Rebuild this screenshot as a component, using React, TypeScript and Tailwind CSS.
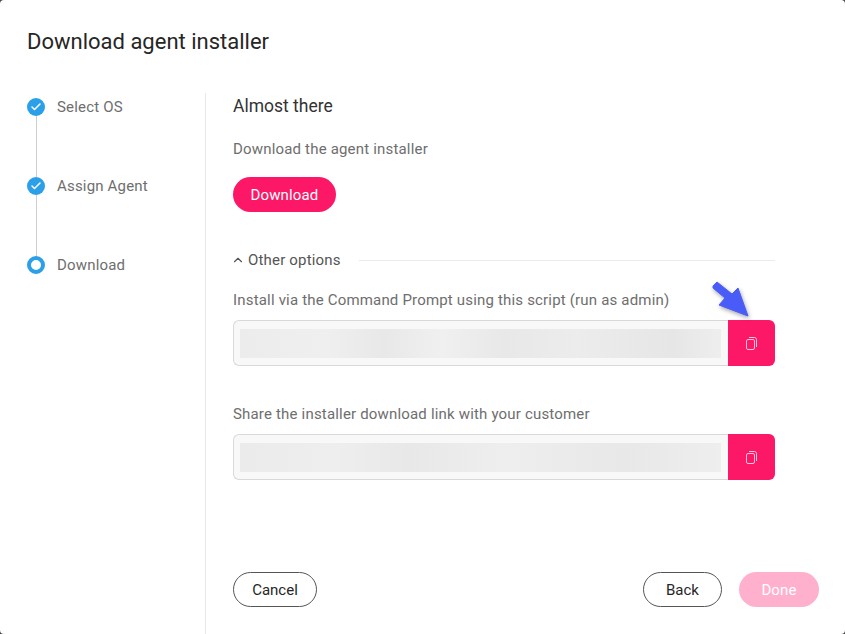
import { ChevronUp, Check } from "lucide-react";

const steps = ["Select OS", "Assign Agent", "Download"];

function StepIcon({ done }: { done: boolean }) {
  if (done) {
    return (
      <div className="flex h-[18px] w-[18px] items-center justify-center rounded-full bg-[#2b9fe8]">
        <Check className="h-3 w-3 text-white" strokeWidth={3} />
      </div>
    );
  }
  return <div className="h-[18px] w-[18px] rounded-full border-[4px] border-[#2b9fe8] bg-white" />;
}

function CopyField({ blurClass }: { blurClass: string }) {
  return (
    <div className="flex h-[46px] w-[542px]">
      <div className="flex flex-1 items-center rounded-l-[6px] border border-r-0 border-[#d9d9d9] bg-[#f8f8f8] pl-[6px] pr-[7px]">
        <div className={`h-[29px] w-full ${blurClass}`} />
      </div>
      <button className="flex w-[47px] items-center justify-center rounded-r-[6px] bg-[#fd1767]">
        <svg className="h-[13px] w-[11px] text-white/75" viewBox="0 0 11 13" fill="none" stroke="currentColor" strokeWidth="1">
          <rect x="0.5" y="2.5" width="8" height="10" rx="1.5" />
          <path d="M3 0.5 H8.5 A2 2 0 0 1 10.5 2.5 V10" />
        </svg>
      </button>
    </div>
  );
}

export default function App() {
  return (
    <div className="h-[634px] w-[845px] overflow-hidden bg-[#444444] font-['Roboto',sans-serif]">
      <div className="h-full overflow-hidden rounded-[4px] bg-white">
        <h1 className="pl-[27px] pt-[29px] text-[22px] leading-[26px] text-[#262626]">Download agent installer</h1>

        <div className="mt-[38px] flex h-[541px]">
          {/* Steps */}
          <div className="w-[205px] shrink-0 pl-[27px] pt-[5px]">
            {steps.map((step, i) => (
              <div key={step} className="flex h-[79px] gap-[12px]">
                <div className="flex w-[18px] flex-col items-center">
                  <StepIcon done={i < 2} />
                  {i < 2 && <div className="w-px flex-1 bg-[#cfcfcf]" />}
                </div>
                <span className="text-[15px] leading-[18px] tracking-[0.18px] text-[#6e6e6e]">{step}</span>
              </div>
            ))}
          </div>

          <div className="flex flex-1 flex-col border-l border-[#e8e8e8] pb-[27px] pl-[27px] pr-[42px]">
            <h2 className="pt-px text-[17.5px] leading-[24px] text-[#333333]">Almost there</h2>
            <p className="mt-[22px] text-[15px] leading-[18px] tracking-[0.18px] text-[#6e6e6e]">Download the agent installer</p>
            <button className="mt-[19px] h-[35px] w-[103px] rounded-full bg-[#fd1767] pt-px text-[15px] font-[450] tracking-[0.15px] text-white">Download</button>

            <div className="mt-[39px] flex w-[542px] items-center">
              <ChevronUp className="-ml-[2px] h-[14px] w-[14px] text-[#555555]" strokeWidth={2} />
              <span className="ml-[3px] text-[15px] leading-[18px] tracking-[0.18px] text-[#555555]">Other options</span>
              <div className="ml-[18px] h-px flex-1 bg-[#ebebeb]" />
            </div>

            <p className="mt-[22px] text-[15px] leading-[18px] tracking-[0.18px] text-[#6e6e6e]">Install via the Command Prompt using this script (run as admin)</p>
            <div className="relative mt-[11px] w-[542px]">
              <CopyField blurClass="bg-[linear-gradient(90deg,#ececec,#efefef_18%,#e8e8e8_30%,#f0f0f0_42%,#e8e8e8_55%,#ececec_70%,#e6e6e6_90%,#eeeeee)]" />
              {/* Arrow pointing at the copy button */}
              <svg className="absolute right-[20px] top-[-41px] h-[44px] w-[44px] drop-shadow-[1px_2px_2px_rgba(0,0,0,0.35)]" viewBox="0 0 44 44">
                <path d="M2 7 L6 3 L21 15 L27 9 L37 37 L8 26 L14 19 L2 9 Z" fill="#4a5cf7" stroke="#4a5cf7" strokeWidth="1" strokeLinejoin="round" />
              </svg>
            </div>

            <p className="mt-[39px] text-[15px] leading-[18px] tracking-[0.18px] text-[#6e6e6e]">Share the installer download link with your customer</p>
            <div className="mt-[11px]">
              <CopyField blurClass="bg-[linear-gradient(90deg,#ebebeb,#eeeeee_20%,#e8e8e8_35%,#eeeeee_55%,#e8e8e8_80%,#eeeeee)]" />
            </div>

            <div className="mt-auto -mr-[16px] flex items-center">
              <button className="h-[35px] w-[84px] rounded-full border border-[#555555] pt-px text-[15px] text-[#262626]">Cancel</button>
              <button className="ml-auto h-[35px] w-[79px] rounded-full border border-[#555555] pt-px text-[15px] text-[#262626]">Back</button>
              <button className="ml-[17px] h-[35px] w-[80px] rounded-full bg-[#feb0cc] pt-px text-[15px] font-[450] tracking-[0.15px] text-white">Done</button>
            </div>
          </div>
        </div>
      </div>
    </div>
  );
}
